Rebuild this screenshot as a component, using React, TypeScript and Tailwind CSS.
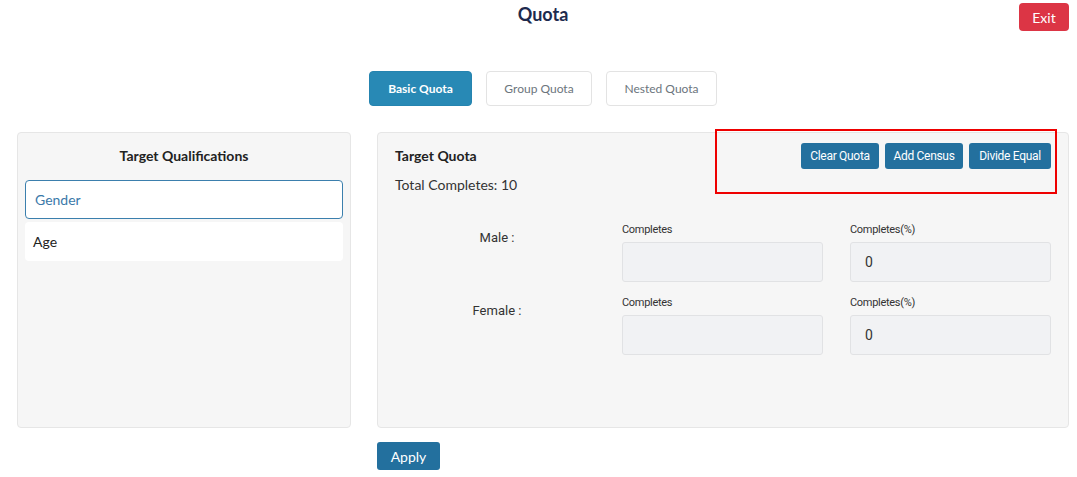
import React from 'react'

const sans = { fontFamily: 'Lato, "Open Sans", sans-serif' }
const narrow = { fontFamily: 'Roboto, "Liberation Sans", sans-serif' }

const rows = [
  { name: 'Male', top: 'mt-[28px]' },
  { name: 'Female', top: 'mt-[14px]' },
]

export default function App() {
  return (
    <div className="w-[1077px] h-[477px] bg-white relative overflow-hidden" style={sans}>
      {/* Header */}
      <div className="flex items-start h-[40px] pt-[3px] pr-[8px]">
        <div className="flex-1 text-center pl-[67px] -mt-[2px] text-[18px] font-bold text-[#1d2a4d]">Quota</div>
        <button className="w-[50px] h-[28px] rounded bg-[#dc3545] text-white text-[14px]">Exit</button>
      </div>

      {/* Tabs */}
      <div className="flex justify-center gap-[14px] mt-[31px] pl-[9px]">
        <button className="w-[103px] h-[35px] rounded bg-[#2889b5] text-white text-[12px] font-bold border border-[#2584b0]">Basic Quota</button>
        <button className="w-[106px] h-[35px] rounded bg-white text-[#6c757d] text-[12px] border border-[#e3e3e3]">Group Quota</button>
        <button className="w-[111px] h-[35px] rounded bg-white text-[#6c757d] text-[12px] border border-[#e3e3e3]">Nested Quota</button>
      </div>

      {/* Panels */}
      <div className="flex gap-[26px] pl-[17px] pr-[8px] mt-[26px]">
        <div className="w-[334px] h-[296px] bg-[#f6f6f6] border border-[#e6e6e6] rounded px-[7px] pt-[12px]">
          <div className="text-center text-[14px] font-bold text-[#222]">Target Qualifications</div>
          <div className="mt-[14px] h-[39px] rounded-[4px] border border-[#3b7fad] bg-white flex items-center pl-[9px] text-[14px] text-[#3b79a9]">Gender</div>
          <div className="mt-[3px] h-[39px] rounded-[4px] bg-white flex items-center pl-[8px] text-[14px] text-[#222]">Age</div>
        </div>

        <div className="flex-1 h-[296px] bg-[#f6f6f6] border border-[#e6e6e6] rounded pl-[17px] pr-[17px] pt-[10px]">
          <div className="flex items-start justify-between">
            <div className="pt-[2px]">
              <div className="text-[14px] font-bold text-[#222]">Target Quota</div>
              <div className="mt-[8px] text-[14px] text-[#333]">Total Completes: 10</div>
            </div>
            <div className="flex gap-[6px]" style={narrow}>
              <button className="w-[78px] h-[26px] rounded-[3px] bg-[#23709e] text-white text-[12px] tracking-[-0.3px]">Clear Quota</button>
              <button className="w-[78px] h-[26px] rounded-[3px] bg-[#23709e] text-white text-[12px] tracking-[-0.3px]">Add Census</button>
              <button className="w-[82px] h-[26px] rounded-[3px] bg-[#23709e] text-white text-[12px] tracking-[-0.3px]">Divide Equal</button>
            </div>
          </div>

          {rows.map((r) => (
            <div key={r.name} className={`flex ${r.top}`} style={narrow}>
              <div className="w-[204px] text-center text-[13px] text-[#333] pt-[5px]">{r.name} :</div>
              <div className="ml-[23px] w-[201px]">
                <div className="text-[11px] text-[#333] tracking-[-0.3px] h-[14px] leading-[14px]">Completes</div>
                <div className="mt-[5px] h-[40px] bg-[#f1f2f4] border border-[#e1e2e4] rounded-[3px]" />
              </div>
              <div className="ml-[27px] w-[201px]">
                <div className="text-[11px] text-[#333] tracking-[-0.3px] h-[14px] leading-[14px]">Completes(%)</div>
                <div className="mt-[5px] h-[40px] bg-[#f1f2f4] border border-[#e1e2e4] rounded-[3px] flex items-center pl-[14px] text-[14px] text-[#333]">0</div>
              </div>
            </div>
          ))}
        </div>
      </div>

      <div className="pl-[377px] mt-[14px]">
        <button className="w-[63px] h-[28px] rounded-[3px] bg-[#23709e] text-white text-[14px]">Apply</button>
      </div>

      {/* Highlight box */}
      <div className="absolute left-[715px] top-[129px] w-[342px] h-[65px] border-2 border-[#ee0000] pointer-events-none" />
    </div>
  )
}
